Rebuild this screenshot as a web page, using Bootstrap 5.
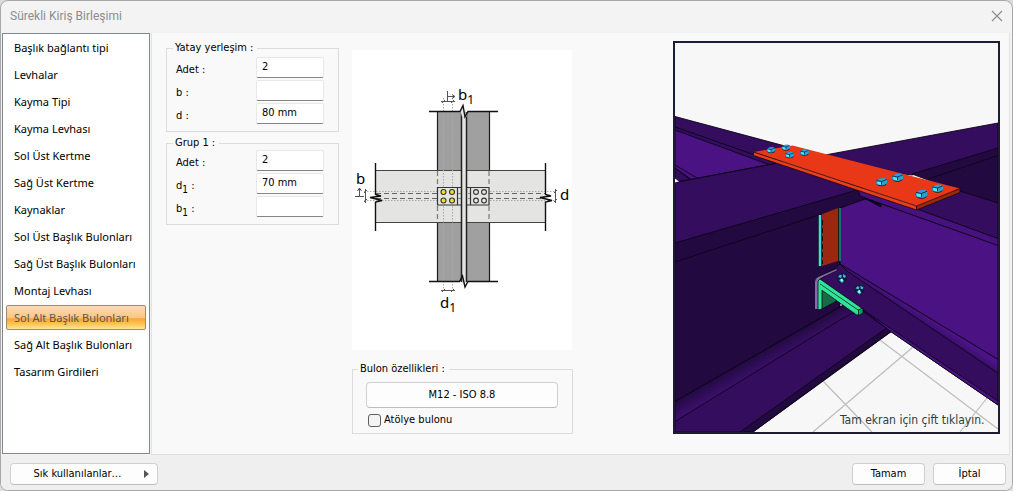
<!DOCTYPE html>
<html lang="tr">
<head>
<meta charset="utf-8">
<meta name="viewport" content="width=device-width, initial-scale=1">
<title>Sürekli Kiriş Birleşimi</title>
<link rel="stylesheet" href="https://cdn.jsdelivr.net/npm/bootstrap@5.3.0/dist/css/bootstrap.min.css">
<style>
  body { font-family: "DejaVu Sans Condensed", "DejaVu Sans", sans-serif; font-stretch: condensed; font-size: 11px; line-height: 14px; color: #000; background: #dcdcdc; }
  .dialog { background: #f3f3f3; border: 1px solid #a8a8a8; border-radius: 8px; overflow: hidden; }
  .title-bar { height: 31px; padding: 0 9px 2px; }
  .title-bar h1 { font: 12px/18px Roboto, "Noto Sans", sans-serif; color: #8c8c8c; }
  .close-x { width: 12px; height: 12px; }
  .side-nav { width: 148px; margin: 0 1px 1px; background: #fff; border: 1px solid #828790; padding: 1px 3px; gap: 2px; font-family: "Noto Sans", sans-serif; }
  .side-nav a { height: 25px; line-height: 23px; padding: 0 7px; border: 1px solid transparent; border-radius: 2px; color: #000; text-decoration: none; white-space: nowrap; }
  .side-nav a.active { color: #555; border-color: #a3896a; background: linear-gradient(#fbdcb8 0, #fcc67f 50%, #fba53a 56%, #fcc04d 75%, #fee596 100%); }
  .work-area { padding-top: 1px; }
  .content-pane { background: #f9f9f9; border-left: 1px solid #e3e3e3; border-right: 1px solid #e3e3e3; border-bottom: 1px solid #dfdfdf; margin-right: 2px; padding: 8px 9px 8px 14px; gap: 13px; min-width: 0; }
  .inputs-col { width: 173px; gap: 4px; }
  .bolt-col { width: 221px; padding-top: 9px; gap: 12px; }
  .group-box { border: 1px solid #dcdcdc; padding: 0 14px 7px 9px; margin: 0; min-width: 0; }
  .group-box legend { float: none; width: auto; margin: 0 0 0 -3px; padding: 0 4px 0 2px; font-size: 11px; line-height: 14px; }
  .group-rows { gap: 2px; }
  .group-rows label { padding-top: 4px; }
  .spaced { padding-top: 2px; }
  .group-box .form-control { width: 68px; height: 21px; min-height: 0; padding: 0 4px 2px 5px; font: inherit; color: #000; background: #fff; border: 1px solid #e8e8e8; border-bottom-color: #868686; border-radius: 2px; }
  .group-box sub { font-size: 10px; bottom: -4px; }
  .btn-win { font: inherit; height: 22px; line-height: 18px; padding: 0 8px; background: #fdfdfd; border: 1px solid #d0d0d0; border-bottom-color: #bcbcbc; border-radius: 4px; color: #000; }
  .btn-win:hover { background: #e5f1fb; }
  .btn-bolt { height: 26px; margin-top: 6px; }
  .group-box .form-check-input { width: 13px; height: 13px; margin: 0; border: 1px solid #5e5e5e; border-radius: 3px; background-color: #f3f3f3; }
  .bolt-box { padding: 0 14px 6px 13px; }
  .bolt-box legend { margin-left: -8px; }
  .check-row { gap: 3px; padding: 5px 0 0 2px; }
  .view-col { min-width: 0; }
  .view-3d { width: 327px; max-width: 100%; height: auto; }
  .bottom-bar { height: 35px; background: #efefef; padding: 2px 6px 0 9px; gap: 8px; }
  .btn-fav { width: 148px; }
  .btn-fav span { padding-right: 8px; }
  .btn-end { width: 73px; }
  .sketch-text { font: 15px "Noto Sans", sans-serif; }
</style>
</head>
<body>
<div class="dialog vh-100 d-flex flex-column">
  <header class="title-bar d-flex align-items-center justify-content-between">
    <h1 class="m-0">Sürekli Kiriş Birleşimi</h1>
    <button type="button" class="border-0 bg-transparent p-0 d-flex" aria-label="Kapat">
      <svg class="close-x" viewBox="0 0 12 12"><path d="M1 1l10 10M11 1L1 11" stroke="#8a8a8a" stroke-width="1.1" fill="none"/></svg>
    </button>
  </header>

  <div class="work-area d-flex flex-fill">
    <nav class="side-nav d-flex flex-column flex-shrink-0">
      <a href="#">Başlık bağlantı tipi</a>
      <a href="#">Levhalar</a>
      <a href="#">Kayma Tipi</a>
      <a href="#">Kayma Levhası</a>
      <a href="#">Sol Üst Kertme</a>
      <a href="#">Sağ Üst Kertme</a>
      <a href="#">Kaynaklar</a>
      <a href="#">Sol Üst Başlık Bulonları</a>
      <a href="#">Sağ Üst Başlık Bulonları</a>
      <a href="#">Montaj Levhası</a>
      <a href="#" class="active" aria-current="page">Sol Alt Başlık Bulonları</a>
      <a href="#">Sağ Alt Başlık Bulonları</a>
      <a href="#">Tasarım Girdileri</a>
    </nav>

    <main class="content-pane d-flex flex-fill align-items-start">
      <div class="inputs-col d-flex flex-column flex-shrink-0">
        <fieldset class="group-box">
          <legend>Yatay yerleşim :</legend>
          <div class="group-rows spaced d-flex flex-column">
            <div class="d-flex align-items-center justify-content-between"><label for="h-adet">Adet :</label><input class="form-control" id="h-adet" type="text" value="2"></div>
            <div class="d-flex align-items-center justify-content-between"><label for="h-b">b :</label><input class="form-control" id="h-b" type="text"></div>
            <div class="d-flex align-items-center justify-content-between"><label for="h-d">d :</label><input class="form-control" id="h-d" type="text" value="80 mm"></div>
          </div>
        </fieldset>
        <fieldset class="group-box">
          <legend>Grup 1 :</legend>
          <div class="group-rows d-flex flex-column">
            <div class="d-flex align-items-center justify-content-between"><label for="g-adet">Adet :</label><input class="form-control" id="g-adet" type="text" value="2"></div>
            <div class="d-flex align-items-center justify-content-between"><label for="g-d">d<sub>1</sub> :</label><input class="form-control" id="g-d" type="text" value="70 mm"></div>
            <div class="d-flex align-items-center justify-content-between"><label for="g-b">b<sub>1</sub> :</label><input class="form-control" id="g-b" type="text"></div>
          </div>
        </fieldset>
      </div>

      <div class="bolt-col d-flex flex-column flex-shrink-0">
        <svg class="bg-white" width="220" height="300" viewBox="352 50 220 300" role="img" aria-label="Bulon yerleşim şeması">
          <path d="M437.500 112h52v169.500h-52z" fill="#a0a0a0"/>
          <path d="M376 170.500h169v52H376z" fill="#e4e4e3"/>
          <g stroke="#1c1c1c" fill="none" stroke-width="1.200">
            <path d="M437.500 112v58M489.500 112v58M437.500 223v58.500M489.500 223v58.500"/>
            <path d="M376 170.500h169M376 222.500h169" stroke="#444"/>
            <path d="M437.500 171v16M437.500 206v16M489 171v16M489 206v16" stroke="#777" stroke-dasharray="5 3"/>
            <path d="M376 193.500h169M376 198.500h169" stroke="#666" stroke-width="1" stroke-dasharray="5 3"/>
            <path d="M364 191.500h192M364 200.500h192M443.500 98v193M452.500 98v193" stroke="#aaa" stroke-width="1" stroke-dasharray="1.500 1.500"/>
          </g>
          <g stroke="#333" fill="#e4e4e3" stroke-width="1.200">
            <path d="M437.500 187.500H462v17.500h-24.500zM466 187.500h23v17.500h-23z"/>
            <path d="M457.500 188v17M470.500 188v17"/>
            <path d="M458 193.500h12M458 198.500h12" stroke="#888" stroke-dasharray="3 2"/>
          </g>
          <path d="M461.500 110h5v173h-5z" fill="#e4e4e3"/>
          <path d="M461.500 110v172M466.500 112v170" stroke="#222" stroke-width="1.500"/>
          <g stroke="#333" stroke-width="1.100">
            <g fill="#f7dc28"><circle cx="443.500" cy="192" r="2.500"/><circle cx="452" cy="192" r="2.500"/><circle cx="443.500" cy="200.500" r="2.500"/><circle cx="452" cy="200.500" r="2.500"/></g>
            <g fill="#e8e8e8"><circle cx="476" cy="192" r="2.400"/><circle cx="484" cy="192" r="2.400"/><circle cx="476" cy="200.500" r="2.400"/><circle cx="484" cy="200.500" r="2.400"/></g>
          </g>
          <path d="M460.500 111.500l2-5 3 10 1.500-5v5h-5z" fill="#e4e4e3"/>
          <g stroke="#111" fill="none" stroke-width="1.400">
            <path d="M429 111.500h31l3-6 2 11.500 3-5.500h30M429 281.500h30.500l3-5.500 2.500 11 3-5.500h30"/>
            <path d="M375.500 163v31.500l5.500 1.500-11 1.500 12 3-6.500 1.500V231M545.500 163v31.500l5.500 1.500-11 1.500 12 3-6.500 1.500V231"/>
          </g>
          <g stroke="#555" fill="none" stroke-width="1">
            <path d="M441 101.500h14M442 103l3-3M451 103l3-3M447.500 91v10M448 96.500h7M452 94.500l3 2-3 2"/>
            <path d="M441 290.500h14M442 292l3-3M451 292l3-3"/>
            <path d="M365.500 189v14M364 193l3-3M364 202l3-3M355 196.500h9M359.500 196v-8M357.500 191l2-3 2 3"/>
            <path d="M555.500 189v14M554 193l3-3M554 202l3-3"/>
          </g>
          <g class="sketch-text">
            <text x="356" y="184">b</text><text x="560" y="200">d</text>
            <text x="458" y="100">b<tspan dy="4" font-size="12">1</tspan></text>
            <text x="440" y="308">d<tspan dy="4" font-size="12">1</tspan></text>
          </g>
        </svg>
        <fieldset class="group-box bolt-box">
          <legend>Bulon özellikleri :</legend>
          <button type="button" class="btn btn-win btn-bolt w-100">M12 - ISO 8.8</button>
          <div class="check-row d-flex align-items-center"><input class="form-check-input" type="checkbox" id="shop-bolt"><label for="shop-bolt">Atölye bulonu</label></div>
        </fieldset>
      </div>

      <div class="view-col flex-fill d-flex justify-content-end">
        <svg class="view-3d" viewBox="673 41 327 393" role="img" aria-label="Birleşimin üç boyutlu görünümü">
          <defs>
            <linearGradient id="fillet" gradientUnits="userSpaceOnUse" x1="750" y1="358" x2="758" y2="372"><stop offset="0" stop-color="#220a40"/><stop offset="1" stop-color="#3c0f6c"/></linearGradient>
            <linearGradient id="filletR" gradientUnits="userSpaceOnUse" x1="920" y1="312" x2="914" y2="321"><stop offset="0" stop-color="#4c1388"/><stop offset="1" stop-color="#340d5e"/></linearGradient>
            <g id="bolt"><ellipse cx="0" cy="1" rx="5.500" ry="3.800" fill="#0b1c30"/><path d="M-5-1l3-2 5-.5 2.500 2v3.500l-4 2-5-.5-2-1.500z" fill="#2f9fd8"/><path d="M-4.500 0l4 .5v3l-3.500-1z" fill="#55eaf5"/><path d="M-5-1l5 1 5-2M0 0v3" stroke="#0b1c30" stroke-width=".8" fill="none"/></g>
            <g id="nut"><circle r="4.800" fill="#0b1c30"/><path d="M-4-1l2-2.500 2 1-1 2.500zM1-4l3 2-1 2-2-1zM-3 2l3-1 2 2-2 2z" fill="#3bb5e6"/><path d="M-1.500 1l2-.5.5 2.500-2 .5z" fill="#b9f7fa"/></g>
          </defs>
          <path d="M673 41h327v393H673z" fill="#f7f7f7"/>
          <path d="M823 381l49 51M813 432l100-85M880 340l118 89M960 432l27-34" stroke="#bdbdbd" stroke-width="1.200" fill="none"/>
          <g stroke="#0c0418" stroke-width=".9" stroke-linejoin="round">
            <path d="M675 116.500L785 146l-5 20-105 16z" fill="#340d5e"/>
            <path d="M675 130l95 35-79 15-16-12z" fill="#4a1282"/>
            <path d="M675 127l103 36M675 165l23 13.500M675 168l17 12" fill="none"/>
            <path d="M825 155l173-32v26l-86 26-87-10z" fill="#340d5e"/>
            <path d="M912 174l86-26v55l-38-11z" fill="#220a40"/>
            <path d="M928 179l70-23.500" fill="none"/>
            <path d="M675 182.500L778 163l90 28-28 17v99L675 401.500z" fill="#220a40"/>
            <path d="M840 194l20-6 30 10v14h-50z" fill="#220a40" stroke="none"/>
            <path d="M675 182.500L778 163l85 25-23 7-165 48z" fill="#340d5e"/>
            <path d="M675 262l165-54 25-9" fill="none"/>
            <path d="M675 401.500L840 307l20-10 32 34-139 101h-78z" fill="#340d5e"/>
            <path d="M675 401.500L840 307l12-7 10 8-22 12-165 101.500z" fill="url(#fillet)"/>
            <path d="M740 432l100-71 48-34 4 4-52 37-87 64z" fill="#220a40"/>
            <path d="M820 280l20-16 158 109v32L890 331z" fill="#340d5e"/>
            <path d="M862 309l136 92v4L890 331z" fill="#4a1282"/>
            <path d="M840 264V208l25-9 17 5 116 41v114.500z" fill="#4a1282"/>
            <path d="M840 264l158 95.500V373l-151-102z" fill="url(#filletR)"/>
            <path d="M917 209l43-18 38 12v36z" fill="#340d5e"/>
            <path d="M858 189l59 20 81 29.500v7L882 204l-22-8z" fill="#47127e"/>
            <path d="M864 198l17 6v3z" fill="#15062a"/>
          </g>
          <path d="M675 178.500l4 3-4 1z" fill="#f7f7f7"/>
          <path d="M822 214l16-6v53l-16 5z" fill="#9b2710"/>
          <path d="M820 215v52" stroke="#102020" stroke-width="4" fill="none"/>
          <path d="M820 215v51" stroke="#44dce0" stroke-width="2.400"/><path d="M839.500 208v53" stroke="#1d6d70" stroke-width="3"/><path d="M838.500 208v54" stroke="#102020" stroke-width="1"/>
          <path d="M822.500 220v44" stroke="#111" stroke-width="1" stroke-dasharray="5 3"/>
          <g stroke="#0c0418" stroke-width=".8" stroke-linejoin="round">
            <path d="M814.500 282q0-4 4-5.500l18-8 1 2-15 7q-4 2-4 5v27h-4z" fill="#8a69ab"/>
            <path d="M819 283l19 15-3 4-15 8z" fill="#176b47"/>
            <path d="M818 281l2-2 43 30-5 7-36-26v19l-4 1z" fill="#2ee496"/>
            <path d="M820 284l38 26v5M858 310l5-2v5l-5 3z" fill="#1c9a66"/>
          </g>
          <path d="M821 285l37 25.500v4L821 289z" fill="#2ee496"/>
          <g stroke="#190708" stroke-width=".8" stroke-linejoin="round">
            <path d="M753.500 152l39-6.500 167.500 43-43.500 17.500z" fill="#e83817" stroke="none"/>
            <path d="M753.500 152l163 54v4l-163-54.500z" fill="#ec3e1c"/>
            <path d="M916.500 206l43.500-17.500v4l-43.500 17.500z" fill="#9b2710"/>
          </g>
          <use href="#bolt" transform="translate(771 149.500) scale(.75)"/><use href="#bolt" transform="translate(786 147) scale(.75)"/><use href="#bolt" transform="translate(789.500 154.500) scale(.8)"/><use href="#bolt" transform="translate(804.500 152) scale(.8)"/>
          <use href="#bolt" x="881.500" y="181.500"/><use href="#bolt" x="897.500" y="177"/><use href="#bolt" transform="translate(921.500 193.500) scale(1.100)"/><use href="#bolt" x="937.500" y="188"/>
          <use href="#nut" x="842" y="278"/><use href="#nut" x="859.500" y="289.500"/>
          <text x="840" y="424" font-size="12" fill="#2c3f40">Tam ekran için çift tıklayın.</text>
          <path d="M674 42h325v391H674z" fill="none" stroke="#1c1c33" stroke-width="2"/>
        </svg>
      </div>
    </main>
  </div>

  <footer class="bottom-bar d-flex align-items-center">
    <button type="button" class="btn btn-win btn-fav d-flex align-items-center me-auto">
      <span class="flex-fill">Sık kullanılanlar…</span>
      <svg width="5" height="8" viewBox="0 0 5 8"><path d="M0 0l5 4-5 4z" fill="#555"/></svg>
    </button>
    <button type="button" class="btn btn-win btn-end">Tamam</button>
    <button type="button" class="btn btn-win btn-end">İptal</button>
  </footer>
</div>
<script src="https://cdn.jsdelivr.net/npm/bootstrap@5.3.0/dist/js/bootstrap.bundle.min.js"></script>
</body>
</html>
